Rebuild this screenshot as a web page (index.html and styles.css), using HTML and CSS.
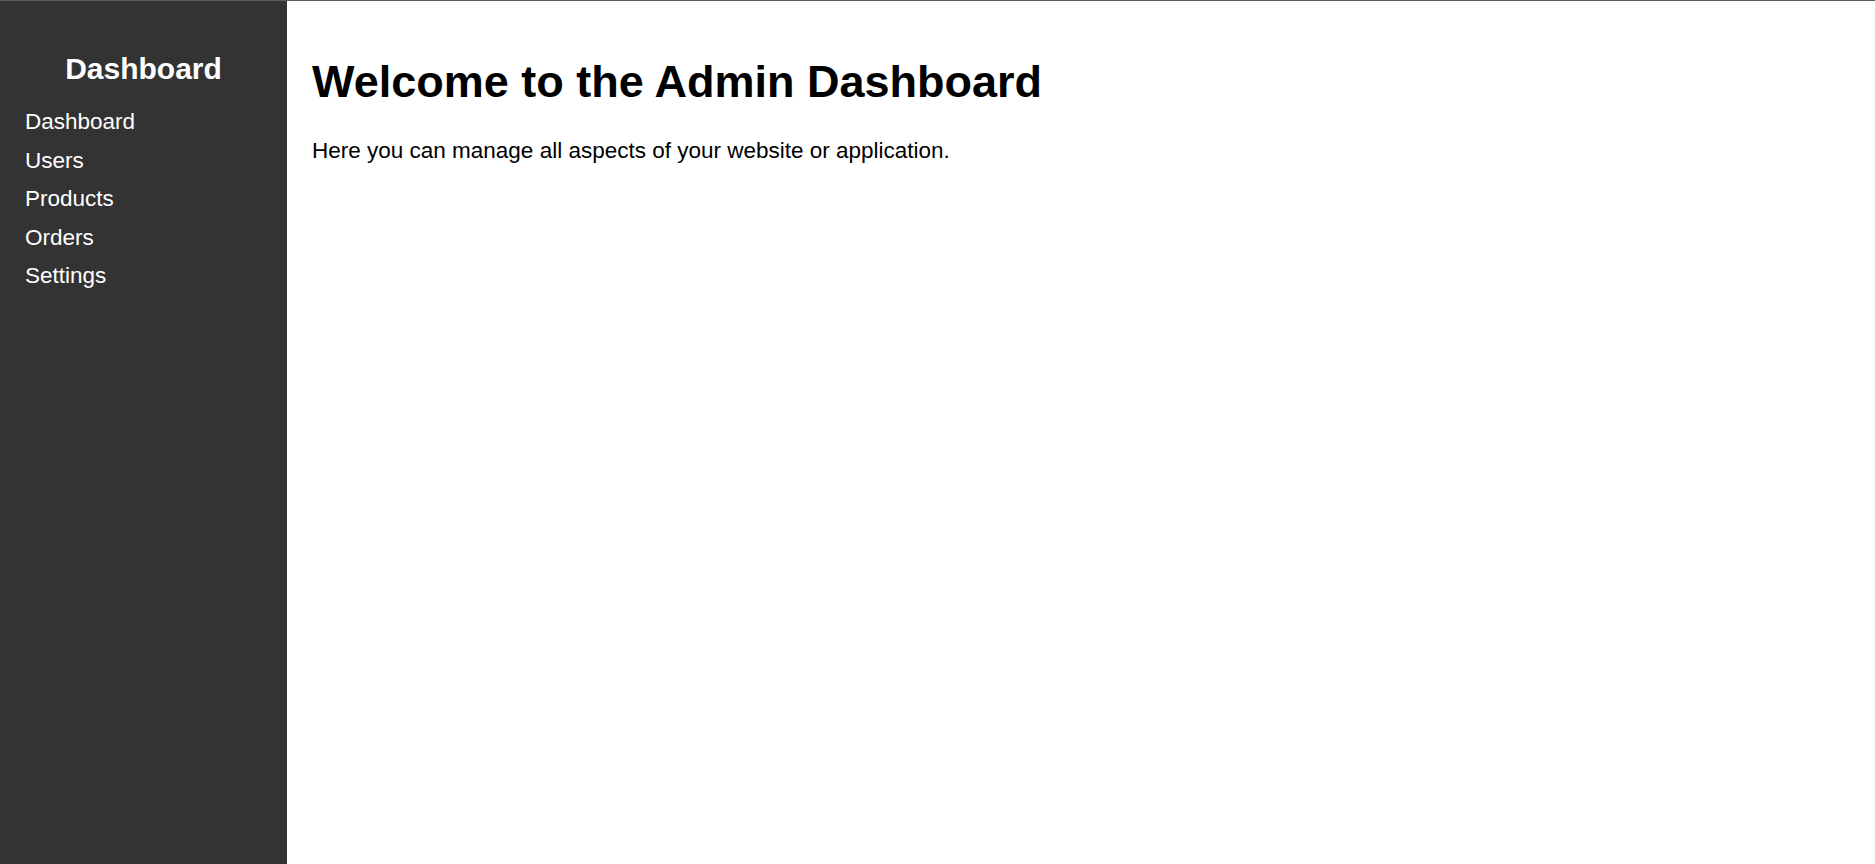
FILE: index.html
```html
<!DOCTYPE html>
<html lang="en">
<head>
<meta charset="utf-8">
<title>Admin Dashboard</title>
<link rel="stylesheet" href="styles.css">
</head>
<body>
<div class="layout">
  <aside class="sidebar">
    <h2 class="sidebar-title">Dashboard</h2>
    <ul class="nav">
      <li class="nav-item"><a class="nav-link" href="#">Dashboard</a></li>
      <li class="nav-item"><a class="nav-link" href="#">Users</a></li>
      <li class="nav-item"><a class="nav-link" href="#">Products</a></li>
      <li class="nav-item"><a class="nav-link" href="#">Orders</a></li>
      <li class="nav-item"><a class="nav-link" href="#">Settings</a></li>
    </ul>
  </aside>
  <main class="content">
    <h1 class="content-title">Welcome to the Admin Dashboard</h1>
    <p class="content-text">Here you can manage all aspects of your website or application.</p>
  </main>
</div>
</body>
</html>
```

FILE: styles.css
```css
html, body {
  margin: 0;
  padding: 0;
  height: 100%;
}

body {
  font-family: "Liberation Sans", Arial, sans-serif;
  background: #ffffff;
  color: #000000;
}

.layout {
  display: flex;
  height: 100%;
  box-sizing: border-box;
  border-top: 1px solid #5c5c5c;
}

.sidebar {
  width: 287px;
  flex: 0 0 287px;
  box-sizing: border-box;
  background: #333333;
  color: #ffffff;
  padding: 25px 25px;
}

.sidebar-title {
  margin: 26px 0 23px;
  font-size: 30px;
  font-weight: bold;
  text-align: center;
}

.nav {
  list-style: none;
  margin: 0;
  padding: 0;
}

.nav-item {
  margin: 0 0 12.5px;
}

.nav-link {
  color: #ffffff;
  text-decoration: none;
  font-size: 22.5px;
}

.content {
  flex: 1;
  padding: 25px;
}

.content-title {
  margin: 30px 0 0;
  font-size: 45px;
  font-weight: bold;
}

.content-text {
  margin: 30px 0 0;
  font-size: 22.5px;
}
```
